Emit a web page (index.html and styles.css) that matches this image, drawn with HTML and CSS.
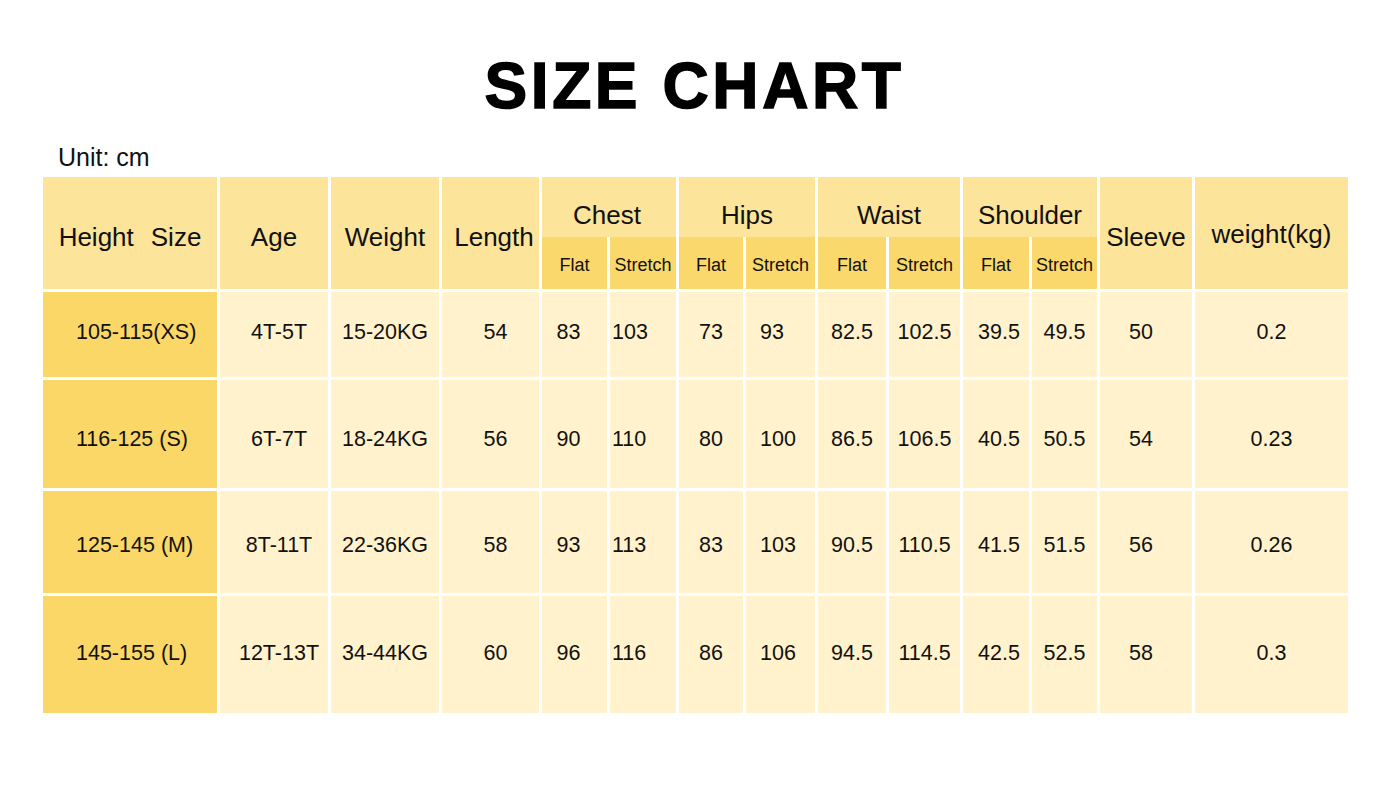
FILE: index.html
```html
<!DOCTYPE html>
<html lang="en">
<head>
<meta charset="utf-8">
<title>Size Chart</title>
<link rel="stylesheet" href="styles.css">
</head>
<body>
<h1 class="title">SIZE CHART</h1>
<p class="unit">Unit: cm</p>
<div class="chart">
  <div class="cell head tall"><span class="hw">Height</span>Size</div>
  <div class="cell head tall">Age</div>
  <div class="cell head tall">Weight</div>
  <div class="cell head tall len">Length</div>
  <div class="cell head group chest">Chest</div>
  <div class="cell head group">Hips</div>
  <div class="cell head group">Waist</div>
  <div class="cell head group">Shoulder</div>
  <div class="cell head tall">Sleeve</div>
  <div class="cell head tall wkg">weight(kg)</div>
  <div class="cell sub">Flat</div>
  <div class="cell sub">Stretch</div>
  <div class="cell sub">Flat</div>
  <div class="cell sub">Stretch</div>
  <div class="cell sub">Flat</div>
  <div class="cell sub">Stretch</div>
  <div class="cell sub">Flat</div>
  <div class="cell sub">Stretch</div>

  <div class="row r1">
    <div class="cell size">105-115(XS)</div>
    <div class="cell data age">4T-5T</div>
    <div class="cell data">15-20KG</div>
    <div class="cell data lenv">54</div>
    <div class="cell data cf">83</div>
    <div class="cell data cs">103</div>
    <div class="cell data">73</div>
    <div class="cell data hs">93</div>
    <div class="cell data">82.5</div>
    <div class="cell data">102.5</div>
    <div class="cell data sf">39.5</div>
    <div class="cell data">49.5</div>
    <div class="cell data slv">50</div>
    <div class="cell data">0.2</div>
  </div>

  <div class="row r2">
    <div class="cell size">116-125 (S)</div>
    <div class="cell data age">6T-7T</div>
    <div class="cell data">18-24KG</div>
    <div class="cell data lenv">56</div>
    <div class="cell data cf">90</div>
    <div class="cell data cs">110</div>
    <div class="cell data">80</div>
    <div class="cell data hs">100</div>
    <div class="cell data">86.5</div>
    <div class="cell data">106.5</div>
    <div class="cell data sf">40.5</div>
    <div class="cell data">50.5</div>
    <div class="cell data slv">54</div>
    <div class="cell data">0.23</div>
  </div>

  <div class="row r3">
    <div class="cell size">125-145 (M)</div>
    <div class="cell data age">8T-11T</div>
    <div class="cell data">22-36KG</div>
    <div class="cell data lenv">58</div>
    <div class="cell data cf">93</div>
    <div class="cell data cs">113</div>
    <div class="cell data">83</div>
    <div class="cell data hs">103</div>
    <div class="cell data">90.5</div>
    <div class="cell data">110.5</div>
    <div class="cell data sf">41.5</div>
    <div class="cell data">51.5</div>
    <div class="cell data slv">56</div>
    <div class="cell data">0.26</div>
  </div>

  <div class="row r4">
    <div class="cell size">145-155 (L)</div>
    <div class="cell data age">12T-13T</div>
    <div class="cell data">34-44KG</div>
    <div class="cell data lenv">60</div>
    <div class="cell data cf">96</div>
    <div class="cell data cs">116</div>
    <div class="cell data">86</div>
    <div class="cell data hs">106</div>
    <div class="cell data">94.5</div>
    <div class="cell data">114.5</div>
    <div class="cell data sf">42.5</div>
    <div class="cell data">52.5</div>
    <div class="cell data slv">58</div>
    <div class="cell data">0.3</div>
  </div>
</div>
</body>
</html>
```

FILE: styles.css
```css
html, body {
  margin: 0;
  padding: 0;
  background: #ffffff;
}

body {
  font-family: "Liberation Sans", Arial, sans-serif;
  color: #111111;
  width: 1384px;
  height: 803px;
  overflow: hidden;
}

.title {
  margin: 50px 0 0 0;
  text-align: center;
  font-size: 64px;
  line-height: 72px;
  font-weight: 700;
  letter-spacing: 3.6px;
  text-indent: 5px;
  -webkit-text-stroke: 1.5px #000;
  color: #000;
}

.unit {
  margin: 20px 0 0 0;
  padding-left: 58px;
  font-size: 25px;
  line-height: 30px;
}

.chart {
  margin: 5px 0 0 43px;
  width: 1305px;
  display: grid;
  grid-template-columns: 174px 108px 108px 97px 65px 66px 64px 69px 68px 71px 66px 65px 92px 153px;
  grid-template-rows: 60px 52px 88px 111px 105px 120px;
  column-gap: 3px;
  row-gap: 0;
  background: #ffffff;
}

.row {
  display: contents;
}

.cell {
  display: flex;
  align-items: center;
  justify-content: center;
  box-sizing: border-box;
  white-space: nowrap;
}

.head {
  background: #fce49a;
  font-size: 26px;
}

.hw {
  margin-right: 17px;
}

.tall {
  grid-row: span 2;
  padding-top: 8px;
}

.len {
  padding-left: 7px;
}

.wkg {
  padding-top: 2px;
}

.group {
  grid-column: span 2;
  padding-top: 16px;
}

.chest {
  padding-right: 4px;
}

.sub {
  background: #fbd86c;
  font-size: 18px;
  padding-top: 4px;
}

.size,
.data {
  border-top: 3px solid #ffffff;
  font-size: 21.5px;
}

.size {
  background: #fad766;
  justify-content: flex-start;
  padding-left: 33px;
}

.data {
  background: #fff2cc;
}

.r1 > .cell {
  padding-bottom: 4px;
}

.r2 > .cell {
  padding-top: 10px;
}

.r3 > .cell {
  padding-top: 6px;
}

.r4 > .cell {
  padding-bottom: 2px;
}

.age {
  padding-left: 10px;
}

.lenv {
  padding-left: 10px;
}

.cf {
  padding-right: 12px;
}

.cs {
  justify-content: flex-start;
  padding-left: 2px;
}

.hs {
  justify-content: flex-start;
  padding-left: 14px;
}

.sf {
  padding-left: 6px;
}

.slv {
  padding-right: 10px;
}
```
